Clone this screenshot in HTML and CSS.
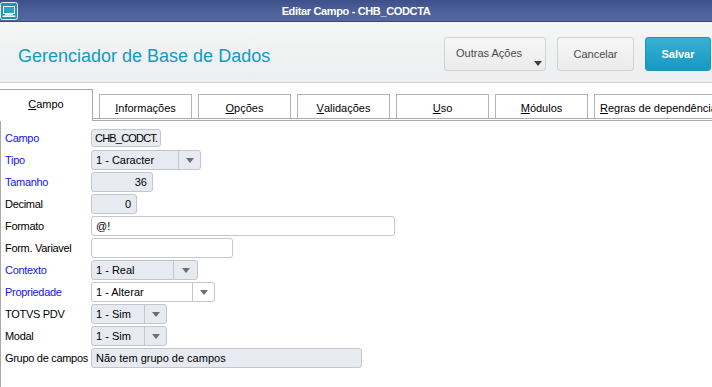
FILE: index.html
```html
<!DOCTYPE html>
<html lang="pt">
<head>
<meta charset="utf-8">
<title>Editar Campo - CHB_CODCTA</title>
<link rel="stylesheet" href="styles.css">
</head>
<body>
<div class="window">
  <div class="titlebar">
    <svg class="app-icon" width="18" height="18" viewBox="0 0 18 18">
      <rect x="0.5" y="0.5" width="17" height="17" rx="2" fill="#2c8fb0" stroke="#d8eef4"/>
      <rect x="3" y="4" width="12" height="8" fill="#e9f6fa"/>
      <rect x="4" y="5" width="10" height="6" fill="#2fa0c2"/>
      <rect x="5" y="12" width="8" height="1.5" fill="#e9f6fa"/>
      <rect x="2.5" y="13.5" width="13" height="1.5" fill="#e9f6fa"/>
    </svg>
    <span class="title-text">Editar Campo - CHB_CODCTA</span>
  </div>

  <div class="header">
    <h1 class="page-title">Gerenciador de Base de Dados</h1>
    <div class="actions">
      <button class="btn btn-more">Outras Ações<span class="caret"></span></button>
      <button class="btn btn-cancel">Cancelar</button>
      <button class="btn btn-primary">Salvar</button>
    </div>
  </div>

  <div class="tabs">
    <div class="tab active"><u>C</u>ampo</div>
    <div class="tab"><u>I</u>nformações</div>
    <div class="tab"><u>O</u>pções</div>
    <div class="tab"><u>V</u>alidações</div>
    <div class="tab"><u>U</u>so</div>
    <div class="tab"><u>M</u>ódulos</div>
    <div class="tab tab-last"><u>R</u>egras de dependência</div>
  </div>

  <div class="panel">
    <div class="form">
      <label class="lbl req">Campo</label>
      <div class="field ro w-campo"><span class="val tight">CHB_CODCT.</span></div>

      <label class="lbl req">Tipo</label>
      <div class="field ro select w-tipo"><span class="val">1 - Caracter</span><span class="arrow"></span></div>

      <label class="lbl req">Tamanho</label>
      <div class="field ro num w-tam"><span class="val">36</span></div>

      <label class="lbl">Decimal</label>
      <div class="field ro num w-dec"><span class="val">0</span></div>

      <label class="lbl">Formato</label>
      <div class="field w-fmt"><span class="val">@!</span></div>

      <label class="lbl">Form. Variavel</label>
      <div class="field w-fvar"><span class="val"></span></div>

      <label class="lbl req">Contexto</label>
      <div class="field ro select w-ctx"><span class="val">1 - Real</span><span class="arrow wide"></span></div>

      <label class="lbl req">Propriedade</label>
      <div class="field select w-prop"><span class="val">1 - Alterar</span><span class="arrow"></span></div>

      <label class="lbl">TOTVS PDV</label>
      <div class="field ro select w-sim"><span class="val">1 - Sim</span><span class="arrow"></span></div>

      <label class="lbl">Modal</label>
      <div class="field ro select w-sim"><span class="val">1 - Sim</span><span class="arrow"></span></div>

      <label class="lbl">Grupo de campos</label>
      <div class="field ro w-grp"><span class="val">Não tem grupo de campos</span></div>
    </div>
  </div>
</div>
</body>
</html>
```

FILE: styles.css
```css
* { box-sizing: border-box; }
html, body {
  margin: 0;
  padding: 0;
  width: 712px;
  height: 387px;
  overflow: hidden;
  background: #ffffff;
  font-family: "Liberation Sans", Arial, sans-serif;
}
.window {
  width: 712px;
  height: 387px;
  display: flex;
  flex-direction: column;
}

/* title bar */
.titlebar {
  height: 22px;
  flex: 0 0 22px;
  background: linear-gradient(#3e5088, #4d5f99 50%, #55689f);
  border-bottom: 1px solid #3a4a7c;
  display: flex;
  align-items: center;
  justify-content: center;
  position: relative;
}
.app-icon {
  position: absolute;
  left: 0;
  top: 2px;
}
.title-text {
  color: #ffffff;
  font-weight: bold;
  font-size: 11px;
  letter-spacing: -0.35px;
}

/* header */
.header {
  height: 61px;
  flex: 0 0 61px;
  background: linear-gradient(#f5f6f6, #eceeef);
  border-bottom: 1px solid #d3d3d3;
  display: flex;
  align-items: flex-start;
  justify-content: space-between;
  padding: 15px 1px 0 18px;
}
.page-title {
  margin: 8px 0 0 0;
  font-size: 18px;
  font-weight: normal;
  color: #0e9cc4;
  line-height: 22px;
}
.actions {
  display: flex;
  gap: 11px;
}
.btn {
  height: 34px;
  border: 1px solid #d2d2d2;
  border-radius: 3px;
  background: linear-gradient(#f7f7f7, #ebebeb);
  font-family: "Liberation Sans", Arial, sans-serif;
  font-size: 11px;
  color: #4a4a4a;
  padding: 0;
  position: relative;
}
.btn-more { width: 102px; text-align: left; padding-left: 11px; padding-bottom: 2px; }
.btn-cancel { width: 77px; }
.btn-primary {
  width: 66px;
  border-color: #1a95bb;
  background: linear-gradient(#3aafd3, #1499c2);
  color: #ffffff;
  font-weight: bold;
}
.caret {
  position: absolute;
  right: 3px;
  bottom: 4px;
  width: 0;
  height: 0;
  border-left: 4px solid transparent;
  border-right: 4px solid transparent;
  border-top: 5px solid #3f3f3f;
}

/* tabs */
.tabs {
  margin-top: 5px;
  height: 32px;
  flex: 0 0 32px;
  display: flex;
  align-items: flex-end;
  gap: 6px;
  position: relative;
  z-index: 1;
}
.tab {
  flex: 0 0 93px;
  height: 24px;
  margin-bottom: 2px;
  border: 1px solid #b4b4b4;
  border-bottom: none;
  background: #ffffff;
  font-size: 11px;
  color: #000000;
  display: flex;
  align-items: center;
  justify-content: center;
  padding-top: 2px;
  white-space: nowrap;
}
.tab u { text-decoration: underline; text-underline-offset: 1px; }
.tab.active {
  height: 32px;
  margin-bottom: -1px;
  border-left: none;
  border-color: #a9a9a9;
  padding-bottom: 6px;
}
.tab-last { flex: 0 0 130px; justify-content: flex-start; padding-left: 5px; }

/* panel */
.panel {
  flex: 1;
  border-top: 3px double #acacac;
  border-left: 1px solid #a9a9a9;
  margin-top: -2px;
  padding: 7px 0 0 4px;
}
.form {
  display: grid;
  grid-template-columns: 86px auto;
  grid-auto-rows: 20px;
  row-gap: 2px;
  justify-items: start;
  align-items: center;
}
.lbl {
  font-size: 11px;
  letter-spacing: -0.3px;
  color: #000000;
  white-space: nowrap;
}
.lbl.req { color: #1414e6; }

.field {
  height: 20px;
  border: 1px solid #c3c6cb;
  border-radius: 3px;
  background: #ffffff;
  display: flex;
  align-items: center;
  font-size: 11px;
  color: #000000;
  overflow: hidden;
}
.field.ro { background: #e7eaf0; }
.field .val {
  flex: 1;
  padding-left: 4px;
  white-space: nowrap;
}
.field .val.tight { letter-spacing: -0.8px; padding-left: 3px; }
.field.num .val { text-align: right; padding-right: 5px; padding-left: 0; }
.field .arrow {
  flex: 0 0 22px;
  height: 100%;
  border-left: 1px solid #c3c6cb;
  position: relative;
}
.field .arrow.wide { flex-basis: 24px; }
.field .arrow::after {
  content: "";
  position: absolute;
  left: 50%;
  top: 7px;
  margin-left: -4px;
  border-left: 4px solid transparent;
  border-right: 4px solid transparent;
  border-top: 5px solid #6f6f6f;
}

.w-campo { width: 70px; height: 18px; }
.w-tipo { width: 110px; }
.w-tam { width: 62px; }
.w-dec { width: 46px; }
.w-fmt { width: 304px; }
.w-fvar { width: 142px; }
.w-ctx { width: 107px; }
.w-prop { width: 124px; }
.w-sim { width: 76px; }
.w-grp { width: 271px; }
```
